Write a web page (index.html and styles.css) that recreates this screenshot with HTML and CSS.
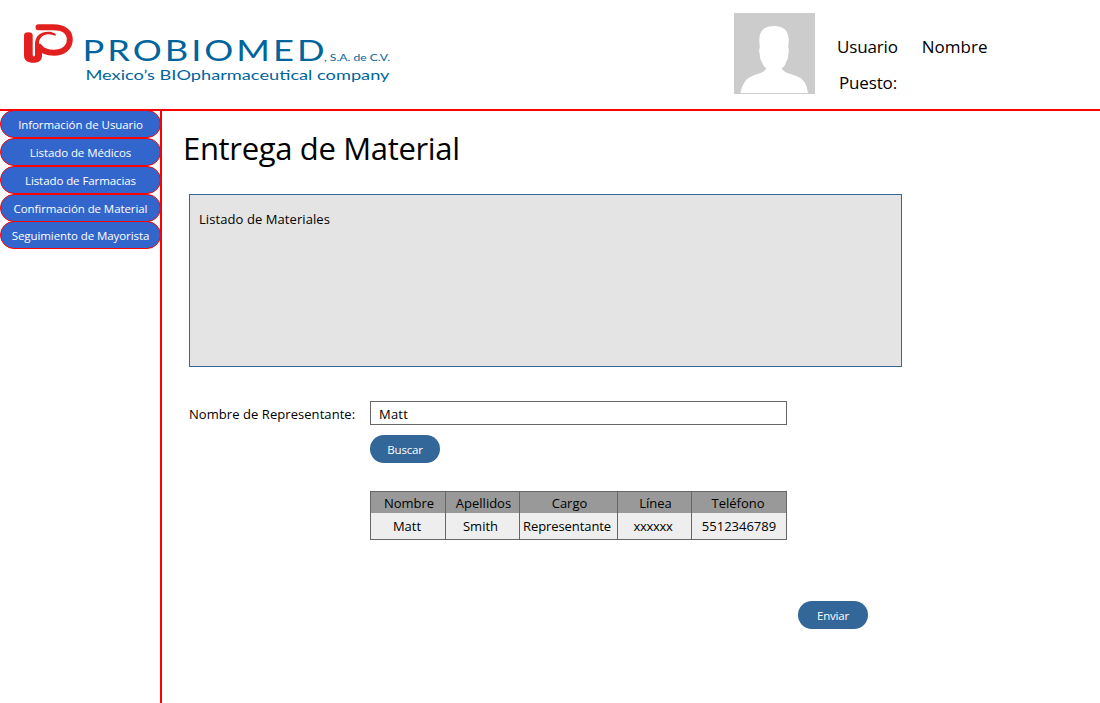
FILE: index.html
```
<!DOCTYPE html>
<html lang="es">
<head>
<meta charset="utf-8">
<title>Entrega de Material</title>
<link rel="stylesheet" href="styles.css">
</head>
<body>
<header class="header">
  <svg class="logo" width="400" height="109" viewBox="0 0 400 109" role="img" aria-label="Probiomed">
    <path fill="#e32020" d="M24 35.500Q24 32.300 28.300 32.300Q32.700 32.300 32.700 35.500V54.500Q32.700 56.500 33.800 56.500Q35 56.500 35 54.500V44C35 36 41 31.800 48 31.800C52.500 31.800 56 33.500 56 35.300C55 36.500 52 33.800 47.500 34.300C42 35 39 39 39 43C39 46 41 49 42 50V55.500C42 60.500 39 62.800 33.500 62.800C27.500 62.800 24 60.500 24 55.500Z"/>
    <path fill="none" stroke="#e32020" stroke-width="6" stroke-linecap="round" d="M38.500 27.200H53C64 27.200 69.800 32 69.800 39.500C69.800 48 62.500 52.700 54 52.700C47.500 52.700 42 50.500 39.500 47"/>
    <g class="logo-text">
      <text transform="scale(1.25 1)" x="66" y="61" font-size="29" textLength="193.600" lengthAdjust="spacing">PROBIOMED</text>
      <text x="324" y="60.500" font-size="9.500" textLength="66" lengthAdjust="spacingAndGlyphs">, S.A. de C.V.</text>
      <text x="85.500" y="80" font-size="13.500" textLength="304" lengthAdjust="spacingAndGlyphs">Mexico’s BIOpharmaceutical company</text>
    </g>
  </svg>
  <div class="user">
    <svg class="avatar" width="81" height="81" viewBox="0 0 81 81" aria-hidden="true">
      <path fill="#fff" d="M40 13C30 13 25 18 25.300 28L25.800 35C24.800 36 25 38 25.700 41C26.200 44 26 47 28 49C29 54 32 54 32 56C27 63 16 60 10 70Q7 75 6.500 80H74Q73.500 75 71 70C65 60 53 63 48 56C48 54 51 54 52 49C54 47 54 44 54.300 41C55 38 55 36 54.200 35L54.700 28C55 18 50 13 40 13Z"/>
    </svg>
    <div class="user-info">
      <div class="user-row"><span class="user-label">Usuario</span><span class="user-name">Nombre</span></div>
      <div class="user-role">Puesto:</div>
    </div>
  </div>
</header>
<div class="body">
  <nav class="sidebar">
    <a class="nav-item nav-info">Información de Usuario</a>
    <a class="nav-item">Listado de Médicos</a>
    <a class="nav-item">Listado de Farmacias</a>
    <a class="nav-item">Confirmación de Material</a>
    <a class="nav-item nav-last">Seguimiento de Mayorista</a>
  </nav>
  <main class="main">
    <h1 class="title">Entrega de Material</h1>
    <section class="panel"><span>Listado de Materiales</span></section>
    <div class="search">
      <label class="label" for="rep">Nombre de Representante:</label>
      <input class="input" id="rep" value="Matt">
    </div>
    <button class="button">Buscar</button>
    <table class="table">
      <colgroup><col class="c1"><col class="c2"><col class="c3"><col class="c4"><col class="c5"></colgroup>
      <thead><tr><th>Nombre</th><th>Apellidos</th><th>Cargo</th><th>Línea</th><th class="phone">Teléfono</th></tr></thead>
      <tbody><tr><td class="first">Matt</td><td class="back">Smith</td><td class="role">Representante</td><td class="back xs">xxxxxx</td><td>5512346789</td></tr></tbody>
    </table>
    <button class="button send">Enviar</button>
  </main>
</div>
</body>
</html>
```
FILE: styles.css
```
* { box-sizing: border-box; }
body {
  margin: 0;
  height: 703px;
  display: flex;
  flex-direction: column;
  overflow: hidden;
  background: #fff;
  color: #000;
  font-family: "Open Sans", "Noto Sans", sans-serif;
  font-size: 13px;
}
.header {
  height: 111px;
  flex: none;
  display: flex;
  border-bottom: 2px solid #f00;
}
.logo { display: block; }
.logo-text { fill: #00659c; font-family: Lato, sans-serif; }
.user { display: flex; margin: 13px 0 0 334px; }
.avatar { background: #ccc; flex: none; }
.user-info { padding: 21px 0 0 22px; font-size: 17px; line-height: 26px; letter-spacing: -0.15px; }
.user-row { display: flex; gap: 24px; }
.user-name { letter-spacing: 0; }
.user-role { margin: 10px 0 0 2px; }
.body { flex: 1; display: flex; min-height: 0; }
.sidebar {
  width: 162px;
  flex: none;
  border-right: 2px solid #f00;
}
.nav-item {
  display: block;
  width: 161px;
  height: 28px;
  position: relative;
  border: 1px solid #f00;
  border-radius: 14px;
  background: #36c;
  color: #fff;
  text-align: center;
  font-size: 11.5px;
  line-height: 28px;
  letter-spacing: -0.08px;
  white-space: nowrap;
}
.nav-info { margin-top: -1px; }
.nav-last { margin-top: -1px; }
.main { padding: 16px 0 0 27px; width: 938px; }
.title {
  margin: -1px 0 24px -6px;
  font-size: 31px;
  font-weight: 400;
  line-height: 44px;
  letter-spacing: -0.33px;
}
.panel {
  width: 713px;
  height: 173px;
  padding: 14px 9px;
  border: 1px solid #336699;
  background: #e4e4e4;
  line-height: 20px;
  letter-spacing: 0.08px;
}
.search { display: flex; height: 24px; margin-top: 34px; }
.label { width: 181px; line-height: 26px; letter-spacing: 0.06px; white-space: nowrap; }
.input {
  width: 417px;
  height: 24px;
  padding: 1px 8px 0;
  border: 1px solid #666;
  font: inherit;
  letter-spacing: 0.2px;
  color: #000;
}
.button {
  display: block;
  width: 70px;
  height: 28px;
  margin: 10px 0 0 181px;
  padding: 1px 0 0;
  border: 0;
  border-radius: 14px;
  background: #369;
  color: #fff;
  font: 11.5px "Open Sans", sans-serif;
  letter-spacing: -0.2px;
}
.table {
  width: 417px;
  margin: 28px 0 0 181px;
  table-layout: fixed;
  border-collapse: separate;
  border-spacing: 0;
  border: solid #666;
  border-width: 1px 1px 1px 0;
  text-align: center;
}
.c1 { width: 75px; }
.c2 { width: 74px; }
.c3 { width: 98px; }
.c4 { width: 74px; }
.c5 { width: 95px; }
.table th, .table td { padding: 0; border-left: 1px solid #666; font-weight: 400; white-space: nowrap; }
.table th { height: 21px; background: #999; line-height: 20px; padding-top: 1px; padding-left: 2px; }
.table .phone { padding-left: 0; padding-right: 2px; }
.table td { height: 26px; background: #eee; line-height: 26px; }
.table .first { padding-right: 2px; }
.table .back { padding-right: 4px; }
.table .xs { letter-spacing: -0.3px; padding-right: 3px; }
.table .role { padding-left: 3px; text-align: left; letter-spacing: -0.08px; }
.send { margin: 61px 0 0 609px; }
```
